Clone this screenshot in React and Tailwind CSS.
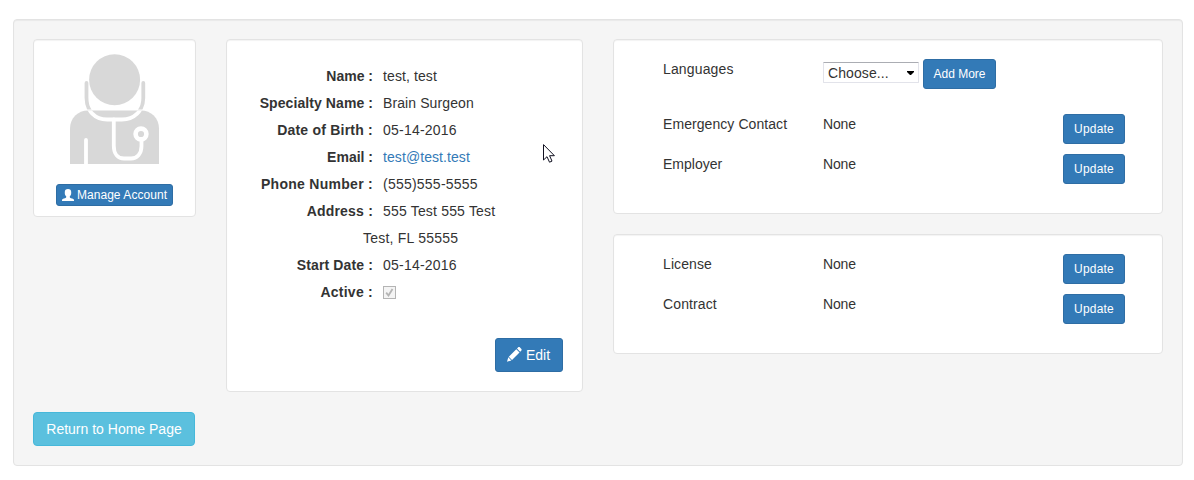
const well = "rounded border border-[#e3e3e3] shadow-[inset_0_1px_1px_rgba(0,0,0,0.05)]";
const primary = "flex items-center justify-center rounded-[3px] border border-[#2e6da4] bg-[#337ab7] text-white whitespace-nowrap";

function DoctorIcon() {
  return (
    <svg width="90" height="110" viewBox="0 0 90 110" fill="none" aria-hidden="true">
      <defs>
        <clipPath id="above-body">
          <rect x="0" y="0" width="90" height="55.5" />
        </clipPath>
        <clipPath id="inside-body">
          <rect x="0" y="56.5" width="90" height="53.5" />
        </clipPath>
      </defs>
      <circle cx="44.6" cy="25.8" r="25.5" fill="#d8d8d8" />
      <path d="M0 110V74.500C0 64 8 56.500 18 56.500H71C81 56.500 89 64 89 74.500V110Z" fill="#d8d8d8" />
      <path
        d="M16.500 29V44C16.500 57 25 65.500 37 65.500H52C64 65.500 73.300 57 73.300 44V29"
        stroke="#d8d8d8"
        strokeWidth="3.8"
        strokeLinecap="round"
        clipPath="url(#above-body)"
      />
      <path
        d="M16.500 29V44C16.500 57 25 65.500 37 65.500H52C64 65.500 73.300 57 73.300 44V29"
        stroke="#fff"
        strokeWidth="3.8"
        clipPath="url(#inside-body)"
      />
      <path d="M43.800 65.500V92C43.800 100 48 104.500 54 104.500H61C67 104.500 71.500 100 71.500 92V87M16 112V86" stroke="#fff" strokeWidth="3.8" strokeLinecap="round" />
      <circle cx="71" cy="80" r="5.400" stroke="#fff" strokeWidth="4.600" />
    </svg>
  );
}

function UserIcon() {
  return (
    <svg width="12" height="12" viewBox="0 0 12 12" fill="currentColor" className="-mt-px" aria-hidden="true">
      <path d="M6 0C3.800 0 2.800 1 2.800 3V4.200C2.800 5.600 3.400 6.600 4.200 7.300V8.200C4.200 8.700 3.300 9.100 2 9.600C.7 10.100 0 10.400 0 11.200V12H12V11.200C12 10.400 11.300 10.100 10 9.600C8.700 9.100 7.800 8.700 7.800 8.200V7.300C8.600 6.600 9.200 5.600 9.200 4.200V3C9.200 1 8.200 0 6 0Z" />
    </svg>
  );
}

function PencilIcon() {
  return (
    <svg width="15" height="15" viewBox="0 0 15 15" fill="currentColor" className="-mt-0.5" aria-hidden="true">
      <path d="M11 .5C11.600 -.1 12.400 -.1 13 .5L14.200 1.700C14.800 2.300 14.800 3.100 14.200 3.700L13.200 4.700L10 1.500ZM9.300 2.200L12.500 5.400L5 12.900L1.800 9.700ZM1.300 10.300L4.400 13.400L0 14.700Z" />
    </svg>
  );
}

const details = [
  { label: "Name :", value: "test, test", valueClass: "tracking-[0.1px]" },
  { label: "Specialty Name :", labelClass: "tracking-[0.08px]", value: "Brain Surgeon", valueClass: "tracking-[0.1px]" },
  { label: "Date of Birth :", labelClass: "tracking-[0.22px]", value: "05-14-2016", valueClass: "tracking-[0.22px]" },
  { label: "Email :", value: "test@test.test", valueClass: "text-[#337ab7] tracking-[0.08px]" },
  { label: "Phone Number :", labelClass: "tracking-[0.28px]", value: "(555)555-5555", valueClass: "tracking-[0.23px]" },
  { label: "Address :", labelClass: "tracking-[0.2px]", value: "555 Test 555 Test", valueClass: "tracking-[0.18px]" },
  { label: "", value: "Test, FL 55555", valueClass: "tracking-[0.22px]" },
  { label: "Start Date :", labelClass: "tracking-[0.13px]", value: "05-14-2016", valueClass: "tracking-[0.22px]" },
  { label: "Active :", labelClass: "tracking-[0.25px]", checked: true },
];

function CheckedBox() {
  return (
    <span className="mt-0.5 flex h-[13px] w-[13px] items-center justify-center border border-[#b4b4b4] bg-[#f4f4f4]">
      <svg width="9" height="9" viewBox="0 0 9 9" fill="none" stroke="#b4b4b4" strokeWidth="1.800" aria-hidden="true">
        <path d="M1.200 4.600L3.500 7.500L7.500 1" />
      </svg>
    </span>
  );
}

function Row({ label, labelClass = "" }) {
  return (
    <div className="flex h-[30px] items-start">
      <span className={`w-40 ${labelClass}`}>{label}</span>
      <span className="w-60 tracking-[-0.15px]">None</span>
      <button className={`${primary} h-[30px] w-[62px] text-xs tracking-[0.2px]`}>Update</button>
    </div>
  );
}

export default function App() {
  return (
    <div className="h-[480px] w-[1194px] bg-white pt-[19px] pl-[13px] font-['Liberation_Sans',Arial,sans-serif] text-[14px] leading-5 text-[#333]">
      <main className={`${well} relative h-[447px] w-[1170px] bg-[#f5f5f5] p-[19px]`}>
        <div className="flex h-[353px] items-start">
          <section className={`${well} flex h-[178px] w-[163px] flex-col items-center bg-white pt-[14px]`}>
            <DoctorIcon />
            <button className={`${primary} mt-5 h-[22px] w-[117px] gap-[3px] text-xs`}>
              <UserIcon />
              <span className="tracking-[0.06px]">Manage Account</span>
            </button>
          </section>

          <section className={`${well} ml-[30px] flex h-[353px] w-[357px] flex-col bg-white pt-[22px]`}>
            {details.map(({ label, labelClass = "", value, valueClass, checked }, i) => (
              <div key={i} className="flex h-[27px] items-center">
                <span className={label ? `mr-[10px] w-[146px] text-right font-bold whitespace-nowrap ${labelClass}` : "w-[136px]"}>{label}</span>
                {checked ? <CheckedBox /> : <span className={valueClass}>{value}</span>}
              </div>
            ))}
            <button className={`${primary} mt-[33px] mr-[19px] h-[34px] w-[68px] gap-1 self-end rounded pr-px`}>
              <PencilIcon />
              <span>Edit</span>
            </button>
          </section>

          <div className="ml-[30px] flex w-[550px] flex-col gap-5">
            <section className={`${well} flex h-[175px] flex-col bg-white pt-[19px] pl-[49px]`}>
              <div className="flex h-[55px] items-start">
                <span className="w-40 tracking-[0.15px]">Languages</span>
                <div className="mt-[3px] flex h-[21px] w-[96px] items-center justify-between rounded-[1px] border border-[#e2e3ea] border-t-[#abadb3] pr-1 pl-1">
                  <span className="tracking-[0.1px]">Choose...</span>
                  <svg width="7" height="4" viewBox="0 0 7 4" aria-hidden="true">
                    <path d="M0 0H7V1L4 4H3L0 1Z" fill="#000" />
                  </svg>
                </div>
                <button className={`${primary} ml-1 h-[30px] w-[73px] text-xs`}>Add More</button>
              </div>
              <div className="flex flex-col gap-[10px]">
                <Row label="Emergency Contact" labelClass="tracking-[0.07px]" />
                <Row label="Employer" />
              </div>
            </section>
            <section className={`${well} flex h-[120px] flex-col gap-[10px] bg-white pt-[19px] pl-[49px]`}>
              <Row label="License" labelClass="tracking-[0.1px]" />
              <Row label="Contract" labelClass="tracking-[0.12px]" />
            </section>
          </div>
        </div>

        <button className="mt-5 flex h-[34px] w-[162px] items-center justify-center rounded border border-[#46b8da] bg-[#5bc0de] whitespace-nowrap text-white">
          Return to Home Page
        </button>

        <svg className="absolute top-[124px] left-[529px]" width="13" height="20" viewBox="0 0 13 20" aria-hidden="true">
          <path d="M.5 .6V16L4 12.700L6.500 18.200L9 17.100L6.600 11.700H11.400Z" fill="#fff" stroke="#101020" />
        </svg>
      </main>
    </div>
  );
}
